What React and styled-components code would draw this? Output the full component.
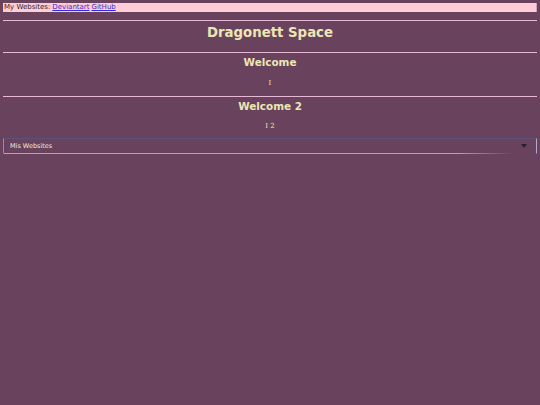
import React from "react";
import styled, { createGlobalStyle } from "styled-components";

const Global = createGlobalStyle`
  html, body { margin: 0; padding: 0; background: #69425e; }
  body { font-family: "DejaVu Sans", Verdana, sans-serif; }
`;

const Page = styled.div`
  padding: 3px 3px;
  display: flex;
  flex-direction: column;
`;

const TopBar = styled.div`
  background: #ffccd7;
  border-right: 1px solid #c9a9b4;
  height: 9px;
  display: flex;
  align-items: center;
  gap: 2px;
  font-size: 7px;
  color: #2a2a2a;
  padding-left: 1px;
  line-height: 9px;
`;

const Link = styled.a`
  color: #3b2bd6;
  text-decoration: underline;
`;

const Rule = styled.hr`
  border: none;
  height: 1px;
  background: #e7b9d4;
  margin: ${(p) => p.$m || "0"};
`;

const Title = styled.h1`
  margin: 0;
  text-align: center;
  color: #ece6b4;
  font-size: ${(p) => p.$size}px;
  font-weight: bold;
  line-height: ${(p) => p.$lh}px;
`;

const Small = styled.p`
  margin: 0;
  text-align: center;
  color: #ece6b4;
  font-family: "DejaVu Serif", serif;
  font-size: 7px;
  line-height: ${(p) => p.$lh}px;
`;

const Select = styled.div`
  height: 14px;
  display: flex;
  align-items: center;
  justify-content: space-between;
  border-top: 1px solid #5d5079;
  border-left: 1px solid #9b86b8;
  border-right: 1px solid #b7a7c9;
  border-bottom: 1px solid transparent;
  position: relative;
  padding: 0 9px 0 6px;
  font-size: 6.5px;
  color: #f3e8dc;
  &::after {
    content: "";
    position: absolute;
    left: 0;
    right: 0;
    bottom: -1px;
    height: 1px;
    background: linear-gradient(to right, #b4a2cc 0%, #b4a2cc 85%, #69425e 96%);
  }
`;

const Arrow = styled.span`
  width: 0;
  height: 0;
  border-left: 3px solid transparent;
  border-right: 3px solid transparent;
  border-top: 4px solid #2a1e30;
`;

export default function App() {
  return (
    <>
      <Global />
      <Page>
        <TopBar>
          My Websites: <Link href="#">Deviantart</Link>
          <Link href="#">GitHub</Link>
        </TopBar>
        <Rule $m="8px 0 0" />
        <Title $size={13.3} $lh={24}>Dragonett Space</Title>
        <Rule $m="7px 0 0" />
        <Title $size={10.4} $lh={18}>Welcome</Title>
        <Small $lh={25}>I</Small>
        <Rule $m="0" />
        <Title $size={10.4} $lh={18}>Welcome 2</Title>
        <Small $lh={23}>I 2</Small>
        <Select>
          <span>Mis Websites</span>
          <Arrow />
        </Select>
      </Page>
    </>
  );
}
